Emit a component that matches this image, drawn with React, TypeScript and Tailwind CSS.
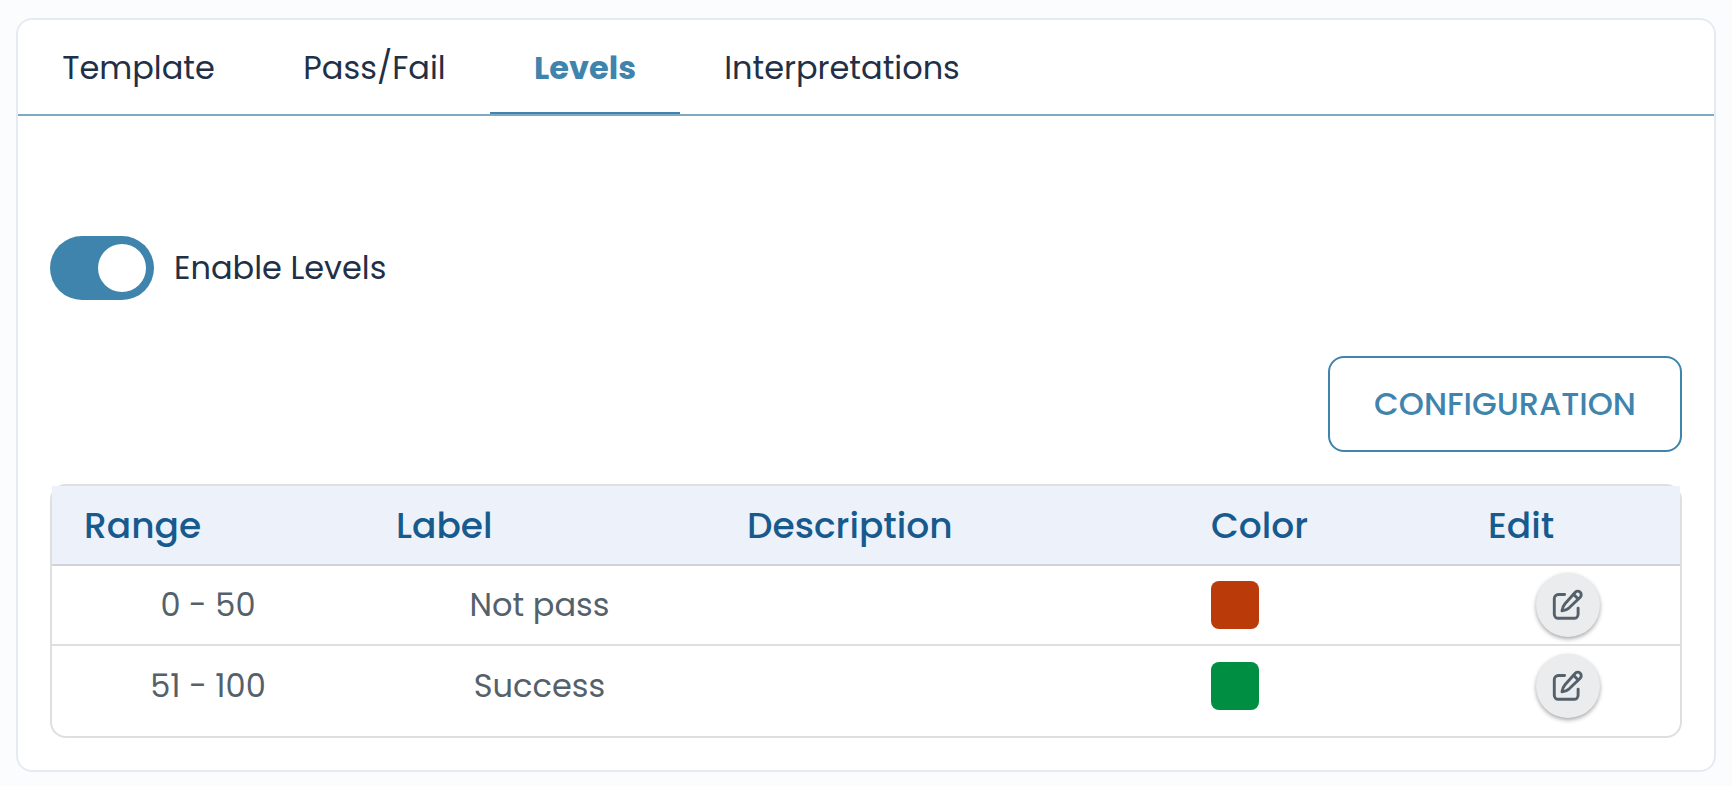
import { useState } from "react";

const tabs = [
  { name: "Template", width: "w-[241px]" },
  { name: "Pass/Fail", width: "w-[231px]" },
  { name: "Levels", width: "w-[190px]" },
  { name: "Interpretations", width: "w-[324px]" },
];

const columns = [
  { name: "Range", width: "w-[312px]" },
  { name: "Label", width: "w-[351px]" },
  { name: "Description", width: "w-[464px]" },
  { name: "Color", width: "w-[277px]" },
  { name: "Edit", width: "w-[224px]" },
];

const levels = [
  { range: "0 - 50", label: "Not pass", description: "", swatch: "bg-[#bb3a09]" },
  { range: "51 - 100", label: "Success", description: "", swatch: "bg-[#008e42]" },
];

function EditIcon() {
  return (
    <svg
      className="size-8"
      viewBox="0 0 32 32"
      fill="none"
      stroke="currentColor"
      strokeWidth="2.9"
      strokeLinecap="round"
      strokeLinejoin="round"
      aria-hidden="true"
    >
      <path d="M12.6 5.5H6.300a4 4 0 0 0-4 4v15.800a4 4 0 0 0 4 4h15.800a4 4 0 0 0 4-4v-6.200" />
      <path d="M23.300 3.300a3.400 3.400 0 0 1 4.900 4.900L17.200 18.800c-1.800 1.600-4.300 2.600-7.200 3 .400-2.800 1.400-5.300 3-7.100z" />
      <path d="M21.600 5.400 26 9.800" />
    </svg>
  );
}

export default function App() {
  const [active, setActive] = useState("Levels");
  const [enabled, setEnabled] = useState(true);

  return (
    <main className="min-h-screen bg-[#fbfcfe] px-4 pt-[18px] pb-3.5 font-[Poppins,Inter,sans-serif] text-[32px] leading-[48px] text-[#223047]">
      <section className="rounded-2xl border-2 border-[#e6eaf2] bg-white">
        <div role="tablist" className="flex border-b-2 border-[#7fa9c3]">
          {tabs.map((tab) => (
            <button
              key={tab.name}
              type="button"
              role="tab"
              aria-selected={active === tab.name}
              onClick={() => setActive(tab.name)}
              className={`${tab.width} border-b-2 pt-6 pb-5 text-center ${
                active === tab.name
                  ? "border-[#3f84ad] font-bold text-[#3f84ad]"
                  : "border-transparent"
              }`}
            >
              {tab.name}
            </button>
          ))}
        </div>

        <div className="px-8 pt-[120px] pb-8">
          <label className="flex w-fit items-center gap-5">
            <input
              type="checkbox"
              role="switch"
              checked={enabled}
              onChange={(e) => setEnabled(e.target.checked)}
              className="h-16 w-26 appearance-none rounded-full bg-[#b8c4ce] p-2 before:block before:size-12 before:rounded-full before:bg-white checked:bg-[#3f84ad] checked:before:ml-10"
            />
            Enable Levels
          </label>

          <div className="mt-14 flex justify-end">
            <button
              type="button"
              className="h-24 w-[354px] rounded-2xl border-2 border-[#3f84ad] font-medium text-[#3f84ad]"
            >
              CONFIGURATION
            </button>
          </div>

          <div className="mt-8 rounded-2xl border-2 border-[#dfdfdf] pb-2.5">
            <table className="w-full table-fixed border-separate border-spacing-0">
              <thead>
                <tr className="h-20 bg-[#edf2fa]">
                  {columns.map((column) => (
                    <th
                      key={column.name}
                      scope="col"
                      className={`${column.width} border-b-2 border-[#d0d4da] px-8 pt-0.5 pb-0 text-left text-4xl font-medium text-[#175a8e]`}
                    >
                      {column.name}
                    </th>
                  ))}
                </tr>
              </thead>
              <tbody className="text-[#54616b]">
                {levels.map((level) => (
                  <tr
                    key={level.range}
                    className="h-20 *:border-b-2 *:border-[#dfdfdf] last:*:border-b-0"
                  >
                    <td className="p-0 text-center">{level.range}</td>
                    <td className="p-0 text-center">{level.label}</td>
                    <td className="p-0 text-center">{level.description}</td>
                    <td className="px-8 py-0">
                      <div className={`size-12 rounded-lg ${level.swatch}`} />
                    </td>
                    <td className="p-0">
                      <button
                        type="button"
                        aria-label={`Edit ${level.label}`}
                        className="mx-auto flex size-16 items-center justify-center rounded-full bg-[#ebecee] shadow-[0_2px_4px_rgba(0,0,0,0.35)]"
                      >
                        <EditIcon />
                      </button>
                    </td>
                  </tr>
                ))}
              </tbody>
            </table>
          </div>
        </div>
      </section>
    </main>
  );
}
